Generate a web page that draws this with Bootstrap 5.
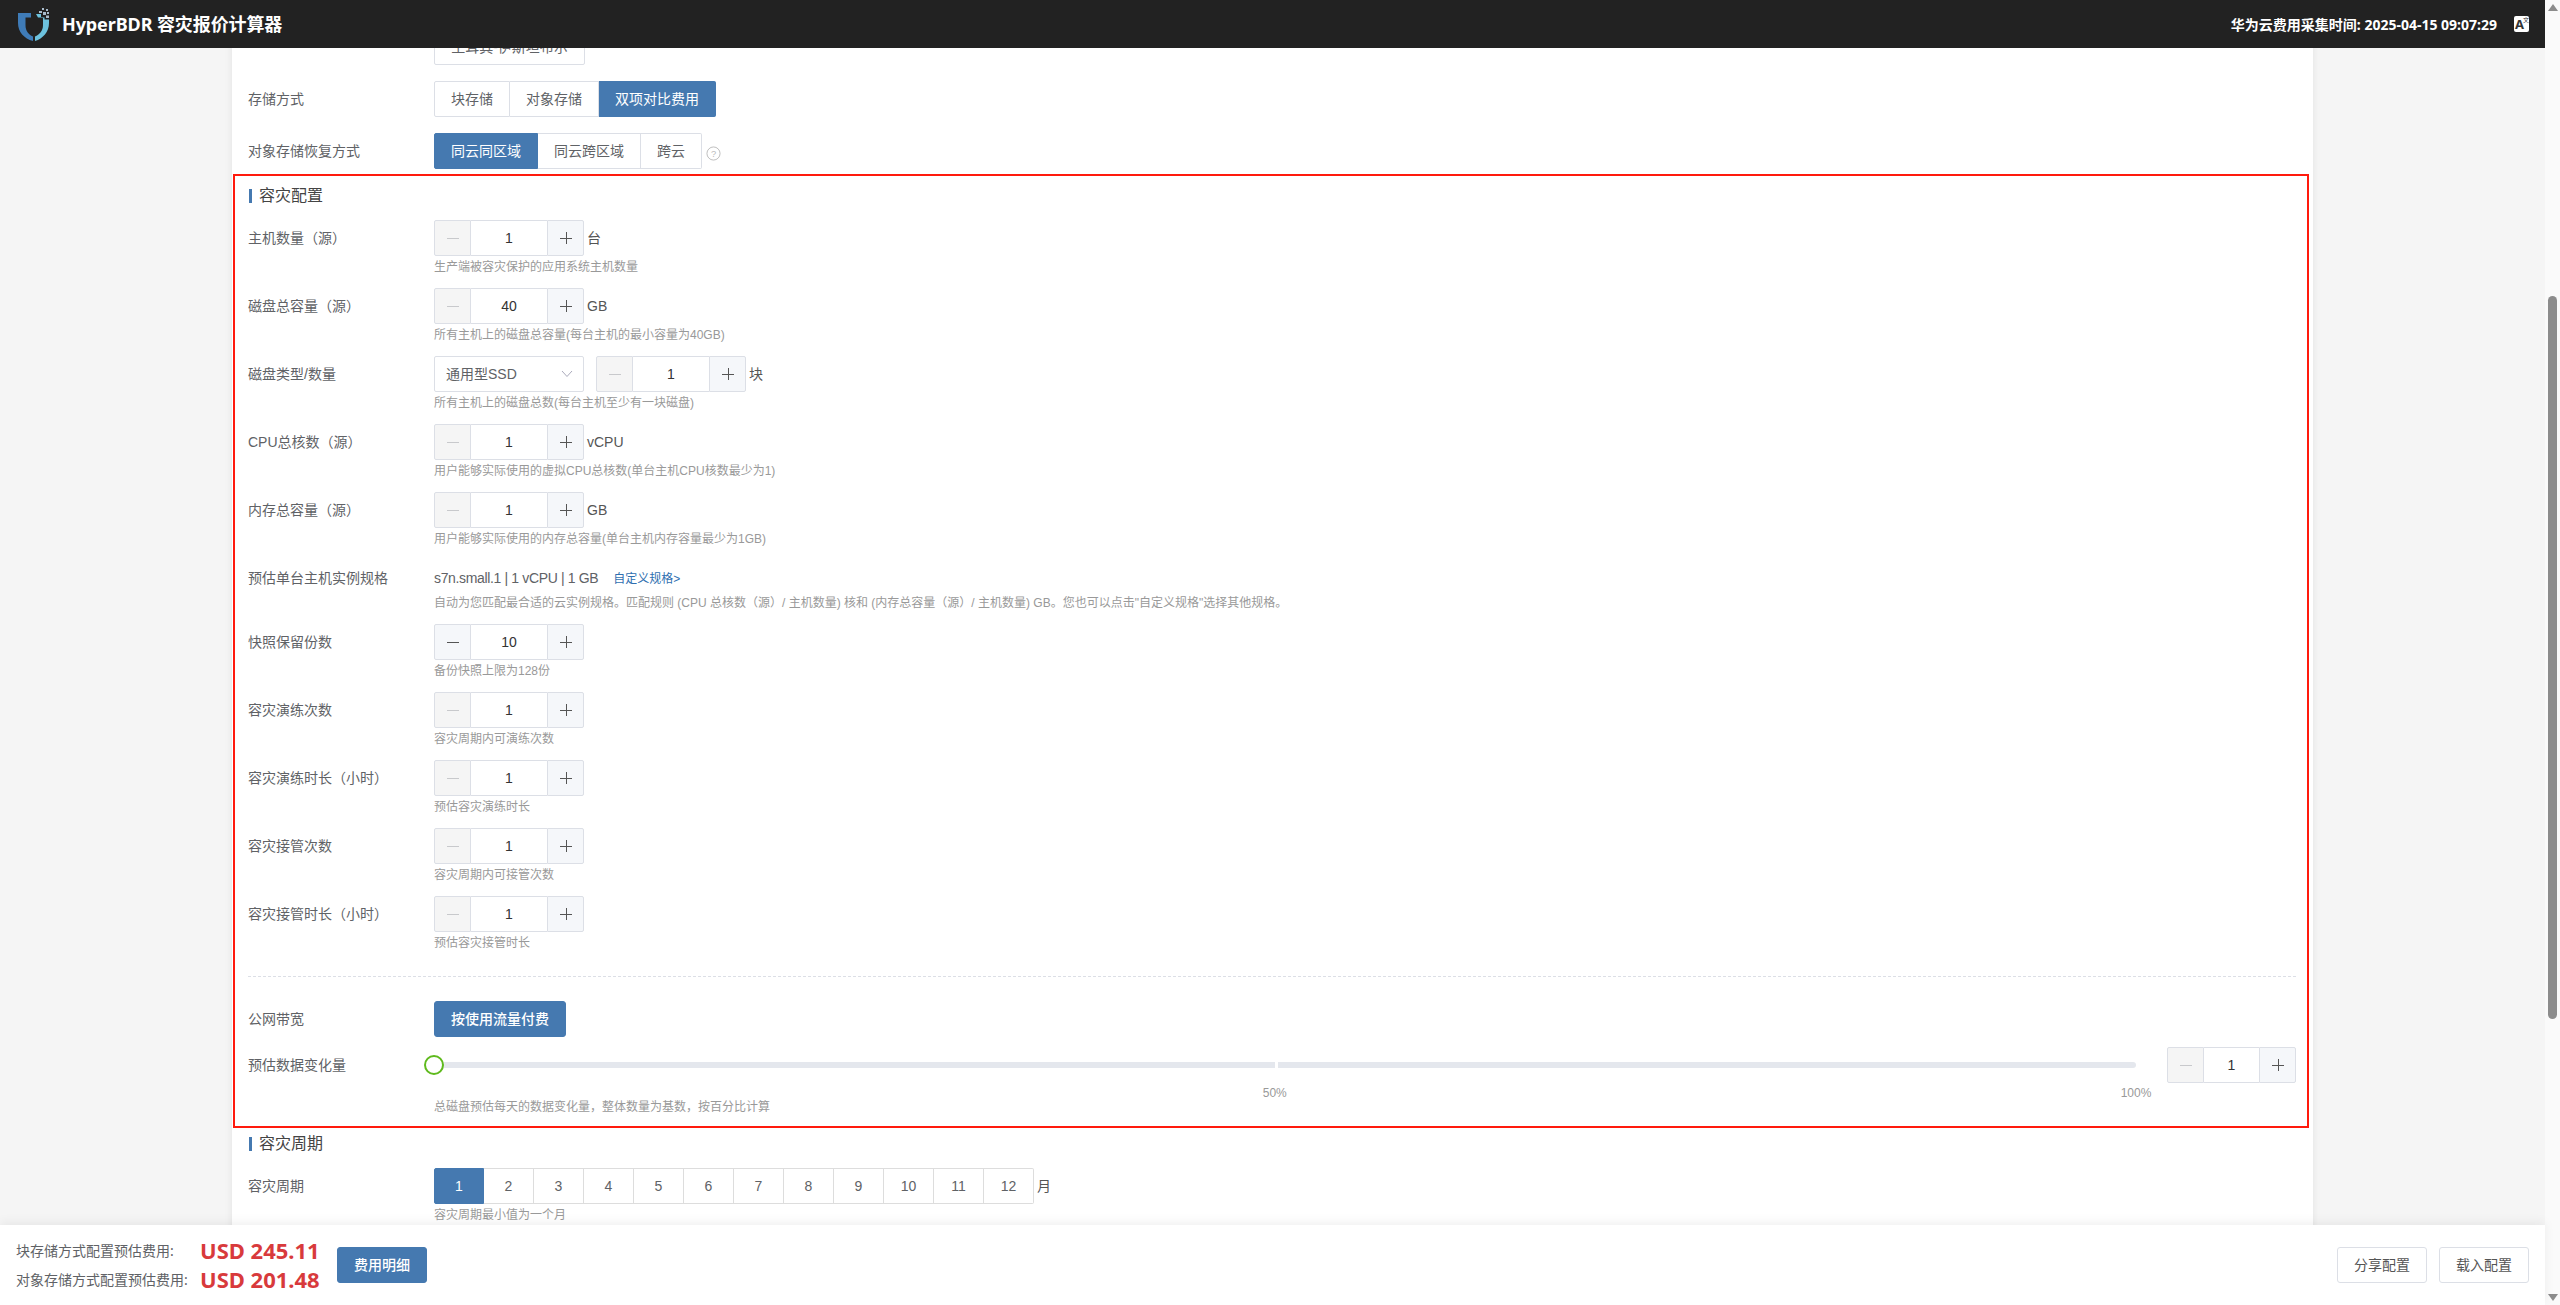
<!DOCTYPE html>
<html lang="zh-CN">
<head>
<meta charset="utf-8">
<title>HyperBDR 容灾报价计算器</title>
<link href="https://cdn.jsdelivr.net/npm/bootstrap@5.3.0/dist/css/bootstrap.min.css" rel="stylesheet">
<style>
html,body{height:100%;overflow:hidden}
body{font-family:"Noto Sans","Noto Sans CJK SC",sans-serif;font-size:14px;color:#606266;background:#f5f5f5}
.shell{height:1305px}
.pagecol{width:2545px}
.topbar{height:48px;background:#222;color:#fff;padding:0 16px 0 18px;z-index:3;position:relative}
.topbar svg{margin-right:12px}
.apptitle{font-size:18px;font-weight:700;letter-spacing:-.1px}
.stamp{font-size:14px;font-weight:700;margin-right:17px}
.langbox{width:15px;height:16px;background:#fff;border-radius:2px;color:#333;font-size:13px;font-weight:700;line-height:17px;padding-left:1px;position:relative}
.langbox small{position:absolute;right:0;top:1px;font-size:6px;font-weight:400;line-height:7px}
.scrollmain{overflow:hidden;padding:0 232px;background:#f5f5f5;flex:1 1 0;min-height:0}
.sheet{background:#fff;margin-top:-19px;padding:0 0 40px 16px;box-shadow:0 0 8px rgba(0,0,0,.08);font-family:"Liberation Sans","Noto Sans CJK SC",sans-serif}
.frow{display:flex;margin-bottom:16px}
.flabel{width:186px;flex:none;line-height:36px;height:36px;color:#606266}
.bx{height:36px;padding:0 16px;font-size:14px;line-height:34px;color:#606266;background:#fff;border:1px solid #dcdfe6;border-radius:2px}
.btn-group>.bx:not(:first-child){margin-left:0!important;border-left-width:0}
.btn-group>.bx.sel,.bxp{background:#4579b0;border-color:#4579b0;color:#fff}
.bxp{height:36px;padding:0 16px;font-size:14px;line-height:34px;border:1px solid #4579b0;border-radius:3px;font-weight:500}
.bxp:hover,.bxp:active{background:#4579b0;color:#fff}
.bxo{height:36px;width:90px;padding:0;font-size:14px;line-height:34px;color:#555;background:#fff;border:1px solid #dcdfe6;border-radius:3px}
.hint{width:15px;height:15px;margin:13px 0 0 4px}
.redbox{border:2px solid #ff1a0d;margin:0 4px 0 -15px;padding:0 11px 8px 13px}
.sectitle{font-size:16px;color:#444;border-left:3px solid #4579b0;padding-left:7px;margin-left:1px;line-height:14px;height:14px}
.secline{padding:13px 0 17px}
.secline2{padding:9px 0 17px}
.item{display:flex;margin-bottom:10px}
.ctl{min-width:0}
.stp{width:150px;height:36px;flex-wrap:nowrap}
.stp.narrow{width:129px}
.stp .sb{width:37px;height:36px;padding:0;border:1px solid #dcdfe6;background:#f5f7fa;display:flex;align-items:center;justify-content:center;border-radius:2px}
.stp .sb.off{background:#f5f5f5;opacity:1}
.stp .form-control{height:36px;padding:0;border:1px solid #dcdfe6;border-left:0;border-right:0;text-align:center;color:#333;font-size:14px;box-shadow:none;margin:0!important;background:#fff}
.stp .sb:last-child{margin-left:0!important}
.unit{line-height:36px;padding-left:3px;color:#555}
.hintline{font-size:12px;line-height:22px;height:22px;color:#999;white-space:nowrap}
.speclbl{height:32px;line-height:36px;color:#606266;letter-spacing:-.35px}
.speclink{color:#2f6fb0;font-size:12px;margin-left:15px;text-decoration:none;letter-spacing:0}
.pick{width:150px;height:36px;font-size:14px;color:#606266;border:1px solid #dcdfe6;border-radius:2px;padding:0 28px 0 11px;margin-right:12px;box-shadow:none;
background-image:url("data:image/svg+xml,%3csvg xmlns='http://www.w3.org/2000/svg' viewBox='0 0 12 8'%3e%3cpath fill='none' stroke='%23aab' d='M1 1l5 5.5L11 1'/%3e%3c/svg%3e");background-size:12px 8px;background-position:right 10px center}
.dashline{border-top:1px dashed #dcdfe6;margin:22px 0 24px}
.slidewrap{position:relative;flex:1;height:36px}
.slidetrack{position:absolute;left:0;right:0;top:15px;height:6px;background:#e4e7ed;border-radius:3px}
.slidesplit{position:absolute;left:49.4%;top:0;width:3px;height:6px;background:#fff}
.slideknob{position:absolute;left:-10px;top:8px;width:20px;height:20px;border-radius:50%;border:2px solid #5fba1d;background:#fff}
.slidemark{position:absolute;top:37px;font-size:12px;line-height:18px;color:#999;transform:translateX(-50%)}
.cy{width:50px;padding:0!important;border-color:#dddddd!important;text-align:center}
.cy.sel{border-color:#4579b0!important}
.botbar{height:80px;background:#fff;padding:0 16px;z-index:3;position:relative;box-shadow:0 -3px 10px rgba(0,0,0,.06)}
.costgrid{display:grid;grid-template-columns:184px 119px;grid-auto-rows:29px;align-items:center;margin:-1px 18px 0 0}
.costlbl{color:#606266;white-space:nowrap}
.costval{font-size:22px;font-weight:700;color:#d83a3c;white-space:nowrap;line-height:29px}
.railcol{width:15px;background:#fafafa;position:relative}
.railup,.raildn{width:0;height:0;border-left:5px solid transparent;border-right:5px solid transparent;margin:0 auto}
.railup{border-bottom:7px solid #8c8c8c;margin-top:4px}
.raildn{border-top:7px solid #8c8c8c;margin-bottom:4px}
.railthumb{width:9px;height:723px;background:#8c8c8c;border-radius:5px;margin:285px auto 0}
</style>
</head>
<body>
<div class="shell d-flex">
<div class="pagecol d-flex flex-column">
  <header class="topbar d-flex align-items-center flex-shrink-0">
    <svg width="32" height="34" viewBox="18 7 32 34" aria-hidden="true">
      <path d="M18 13H31V17.500H25.500V25C25.500 31 28.500 34.500 33 36.500V41C24 38.500 18 32 18 23Z" fill="#3f7cb8"/>
      <path d="M36 14H41V18H43V25C43 31 39.500 34.500 35 36.500V41C43 38.500 49 32 49 23V19.500H44.500V17.500H38Z" fill="#6cc2de"/>
      <g fill="#a9bccb"><rect x="42" y="8" width="2" height="2"/><rect x="46" y="9" width="2" height="2"/><rect x="39" y="11" width="3" height="2"/><rect x="43" y="12" width="3" height="3"/><rect x="47" y="12" width="2" height="2"/><rect x="46" y="15.500" width="3" height="2.500"/></g>
    </svg>
    <span class="apptitle">HyperBDR 容灾报价计算器</span>
    <span class="stamp ms-auto">华为云费用采集时间: 2025-04-15 09:07:29</span>
    <span class="langbox">A<small>文</small></span>
  </header>
  <main class="scrollmain">
    <div class="sheet">
      <div class="frow"><div class="flabel"></div><button class="btn bx" style="width:151px">土耳其-伊斯坦布尔</button></div>
      <div class="frow"><div class="flabel">存储方式</div><div class="btn-group"><button class="btn bx">块存储</button><button class="btn bx">对象存储</button><button class="btn bx sel">双项对比费用</button></div></div>
      <div class="frow mb-0" style="margin-bottom:5px!important"><div class="flabel">对象存储恢复方式</div><div class="btn-group"><button class="btn bx sel">同云同区域</button><button class="btn bx">同云跨区域</button><button class="btn bx">跨云</button></div>
        <svg class="hint" viewBox="0 0 16 16"><circle cx="8" cy="8" r="7" fill="none" stroke="#bbb"/><text x="8" y="12" text-anchor="middle" font-size="10" fill="#bbb">?</text></svg></div>

      <section class="redbox">
        <div class="secline"><div class="sectitle">容灾配置</div></div>

        <div class="item"><div class="flabel">主机数量（源）</div><div class="ctl"><div class="d-flex"><div class="input-group stp"><button class="btn sb off" disabled><svg width="12" height="12"><path d="M0 6.500h12" stroke="#c8c9cc"/></svg></button><input class="form-control" value="1"><button class="btn sb"><svg width="12" height="12"><path d="M0 6.500h12M6.500 0v12" stroke="#555"/></svg></button></div><span class="unit">台</span></div><div class="hintline">生产端被容灾保护的应用系统主机数量</div></div></div>

        <div class="item"><div class="flabel">磁盘总容量（源）</div><div class="ctl"><div class="d-flex"><div class="input-group stp"><button class="btn sb off" disabled><svg width="12" height="12"><path d="M0 6.500h12" stroke="#c8c9cc"/></svg></button><input class="form-control" value="40"><button class="btn sb"><svg width="12" height="12"><path d="M0 6.500h12M6.500 0v12" stroke="#555"/></svg></button></div><span class="unit">GB</span></div><div class="hintline">所有主机上的磁盘总容量(每台主机的最小容量为40GB)</div></div></div>

        <div class="item"><div class="flabel">磁盘类型/数量</div><div class="ctl"><div class="d-flex"><select class="form-select pick"><option>通用型SSD</option></select><div class="input-group stp"><button class="btn sb off" disabled><svg width="12" height="12"><path d="M0 6.500h12" stroke="#c8c9cc"/></svg></button><input class="form-control" value="1"><button class="btn sb"><svg width="12" height="12"><path d="M0 6.500h12M6.500 0v12" stroke="#555"/></svg></button></div><span class="unit">块</span></div><div class="hintline">所有主机上的磁盘总数(每台主机至少有一块磁盘)</div></div></div>

        <div class="item"><div class="flabel">CPU总核数（源）</div><div class="ctl"><div class="d-flex"><div class="input-group stp"><button class="btn sb off" disabled><svg width="12" height="12"><path d="M0 6.500h12" stroke="#c8c9cc"/></svg></button><input class="form-control" value="1"><button class="btn sb"><svg width="12" height="12"><path d="M0 6.500h12M6.500 0v12" stroke="#555"/></svg></button></div><span class="unit">vCPU</span></div><div class="hintline">用户能够实际使用的虚拟CPU总核数(单台主机CPU核数最少为1)</div></div></div>

        <div class="item"><div class="flabel">内存总容量（源）</div><div class="ctl"><div class="d-flex"><div class="input-group stp"><button class="btn sb off" disabled><svg width="12" height="12"><path d="M0 6.500h12" stroke="#c8c9cc"/></svg></button><input class="form-control" value="1"><button class="btn sb"><svg width="12" height="12"><path d="M0 6.500h12M6.500 0v12" stroke="#555"/></svg></button></div><span class="unit">GB</span></div><div class="hintline">用户能够实际使用的内存总容量(单台主机内存容量最少为1GB)</div></div></div>

        <div class="item"><div class="flabel">预估单台主机实例规格</div><div class="ctl"><div class="speclbl">s7n.small.1 | 1 vCPU | 1 GB<a class="speclink" href="#">自定义规格&gt;</a></div><div class="hintline">自动为您匹配最合适的云实例规格。匹配规则 (CPU 总核数（源）/ 主机数量) 核和 (内存总容量（源）/ 主机数量) GB。您也可以点击"自定义规格"选择其他规格。</div></div></div>

        <div class="item"><div class="flabel">快照保留份数</div><div class="ctl"><div class="d-flex"><div class="input-group stp"><button class="btn sb"><svg width="12" height="12"><path d="M0 6.500h12" stroke="#555"/></svg></button><input class="form-control" value="10"><button class="btn sb"><svg width="12" height="12"><path d="M0 6.500h12M6.500 0v12" stroke="#555"/></svg></button></div></div><div class="hintline">备份快照上限为128份</div></div></div>

        <div class="item"><div class="flabel">容灾演练次数</div><div class="ctl"><div class="d-flex"><div class="input-group stp"><button class="btn sb off" disabled><svg width="12" height="12"><path d="M0 6.500h12" stroke="#c8c9cc"/></svg></button><input class="form-control" value="1"><button class="btn sb"><svg width="12" height="12"><path d="M0 6.500h12M6.500 0v12" stroke="#555"/></svg></button></div></div><div class="hintline">容灾周期内可演练次数</div></div></div>

        <div class="item"><div class="flabel">容灾演练时长（小时）</div><div class="ctl"><div class="d-flex"><div class="input-group stp"><button class="btn sb off" disabled><svg width="12" height="12"><path d="M0 6.500h12" stroke="#c8c9cc"/></svg></button><input class="form-control" value="1"><button class="btn sb"><svg width="12" height="12"><path d="M0 6.500h12M6.500 0v12" stroke="#555"/></svg></button></div></div><div class="hintline">预估容灾演练时长</div></div></div>

        <div class="item"><div class="flabel">容灾接管次数</div><div class="ctl"><div class="d-flex"><div class="input-group stp"><button class="btn sb off" disabled><svg width="12" height="12"><path d="M0 6.500h12" stroke="#c8c9cc"/></svg></button><input class="form-control" value="1"><button class="btn sb"><svg width="12" height="12"><path d="M0 6.500h12M6.500 0v12" stroke="#555"/></svg></button></div></div><div class="hintline">容灾周期内可接管次数</div></div></div>

        <div class="item"><div class="flabel">容灾接管时长（小时）</div><div class="ctl"><div class="d-flex"><div class="input-group stp"><button class="btn sb off" disabled><svg width="12" height="12"><path d="M0 6.500h12" stroke="#c8c9cc"/></svg></button><input class="form-control" value="1"><button class="btn sb"><svg width="12" height="12"><path d="M0 6.500h12M6.500 0v12" stroke="#555"/></svg></button></div></div><div class="hintline">预估容灾接管时长</div></div></div>

        <div class="dashline"></div>

        <div class="item"><div class="flabel">公网带宽</div><button class="btn bxp">按使用流量付费</button></div>

        <div class="d-flex" style="margin-bottom:13px"><div class="flabel">预估数据变化量</div>
          <div class="slidewrap"><div class="slidetrack"><span class="slidesplit"></span></div><span class="slideknob"></span><span class="slidemark" style="left:49.4%">50%</span><span class="slidemark" style="left:100%">100%</span></div>
          <div class="input-group stp narrow" style="margin-left:31px"><button class="btn sb off" disabled><svg width="12" height="12"><path d="M0 6.500h12" stroke="#c8c9cc"/></svg></button><input class="form-control" value="1"><button class="btn sb"><svg width="12" height="12"><path d="M0 6.500h12M6.500 0v12" stroke="#555"/></svg></button></div>
        </div>
        <div class="hintline" style="margin-left:186px">总磁盘预估每天的数据变化量，整体数量为基数，按百分比计算</div>
      </section>

      <div class="secline2"><div class="sectitle">容灾周期</div></div>
      <div class="item"><div class="flabel">容灾周期</div><div class="ctl"><div class="d-flex"><div class="btn-group"><button class="btn bx cy sel">1</button><button class="btn bx cy">2</button><button class="btn bx cy">3</button><button class="btn bx cy">4</button><button class="btn bx cy">5</button><button class="btn bx cy">6</button><button class="btn bx cy">7</button><button class="btn bx cy">8</button><button class="btn bx cy">9</button><button class="btn bx cy">10</button><button class="btn bx cy">11</button><button class="btn bx cy">12</button></div><span class="unit">月</span></div><div class="hintline">容灾周期最小值为一个月</div></div></div>
    </div>
  </main>
  <footer class="botbar d-flex align-items-center flex-shrink-0">
    <div class="costgrid"><span class="costlbl">块存储方式配置预估费用:</span><span class="costval">USD 245.11</span><span class="costlbl">对象存储方式配置预估费用:</span><span class="costval">USD 201.48</span></div>
    <button class="btn bxp" style="width:90px;padding:0">费用明细</button>
    <div class="ms-auto d-flex gap-2" style="column-gap:12px!important"><button class="btn bxo">分享配置</button><button class="btn bxo">载入配置</button></div>
  </footer>
</div>
<aside class="railcol d-flex flex-column">
  <div class="railup"></div>
  <div class="railthumb"></div>
  <div class="flex-grow-1"></div>
  <div class="raildn"></div>
</aside>
</div>
<script src="https://cdn.jsdelivr.net/npm/bootstrap@5.3.0/dist/js/bootstrap.bundle.min.js"></script>
</body>
</html>
